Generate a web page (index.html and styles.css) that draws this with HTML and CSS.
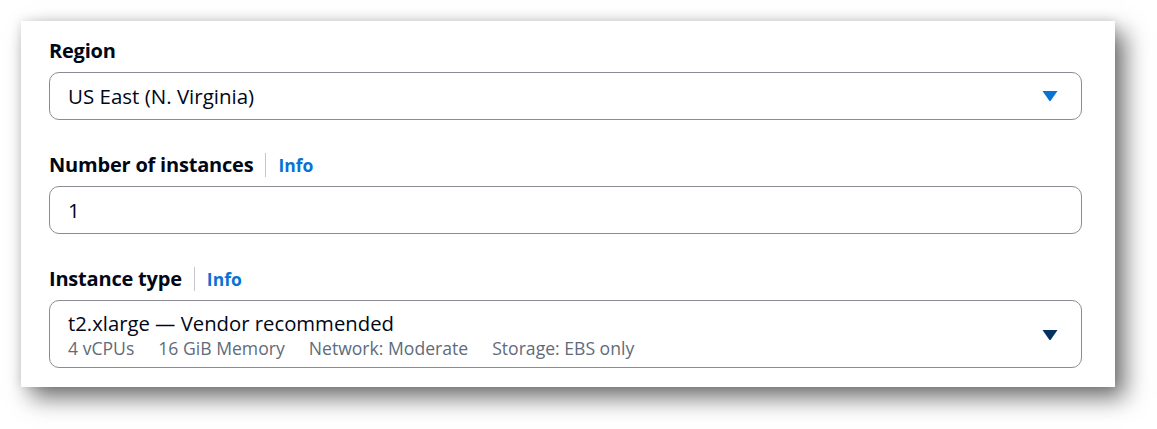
FILE: index.html
```html
<!DOCTYPE html>
<html lang="en">
<head>
	<meta charset="UTF-8">
	<title>Launch instance</title>
	<link rel="stylesheet" href="styles.css">
</head>
<body>
	<div class="panel">
		<div class="field">
			<div class="label"><span class="label-text">Region</span></div>
			<div class="select">
				<span class="value">US East (N. Virginia)</span>
				<svg class="caret" width="16" height="16" viewBox="0 0 16 16"><path d="M0.5 3h15l-6.6 9.6a1.1 1.1 0 0 1-1.8 0z" fill="#0972d3"/></svg>
			</div>
		</div>
		<div class="field">
			<div class="label"><span class="label-text">Number of instances</span><span class="sep"></span><a href="#" class="info">Info</a></div>
			<div class="input"><span class="value">1</span></div>
		</div>
		<div class="field">
			<div class="label"><span class="label-text">Instance type</span><span class="sep"></span><a href="#" class="info">Info</a></div>
			<div class="select tall">
				<div class="option">
					<div class="value">t2.xlarge — Vendor recommended</div>
					<div class="tags">
						<span>4 vCPUs</span>
						<span>16 GiB Memory</span>
						<span>Network: Moderate</span>
						<span>Storage: EBS only</span>
					</div>
				</div>
				<svg class="caret" width="16" height="16" viewBox="0 0 16 16"><path d="M0.5 3h15l-6.6 9.6a1.1 1.1 0 0 1-1.8 0z" fill="#033160"/></svg>
			</div>
		</div>
	</div>
</body>
</html>
```

FILE: styles.css
```css
*{
	margin: 0;
	padding: 0;
	box-sizing: border-box;
}
html,body{
	height: 100%;
}
body{
	background: #fff;
	padding: 21px 0 0 21px;
	font-family: "Open Sans", "Noto Sans", Arial, sans-serif;
	color: #000716;
}
a{
	text-decoration: none;
}
.panel{
	width: 1094px;
	height: 366px;
	padding: 19px 33px 19px 28px;
	background: #fff;
	box-shadow: 10px 11px 22px rgba(0,0,0,0.55), 0 0 10px rgba(0,0,0,0.12);
}
.field{
	margin-bottom: 34px;
}
.field:last-child{
	margin-bottom: 0;
}
.label{
	display: flex;
	align-items: center;
	height: 21px;
	margin-bottom: 11px;
}
.label-text{
	font-size: 20px;
	font-weight: 700;
	letter-spacing: -0.2px;
}
.sep{
	width: 1px;
	height: 24px;
	background: #c6c6cd;
	margin: 0 12px;
}
.info{
	color: #0972d3;
	font-size: 17.5px;
	font-weight: 700;
}
.select,
.input{
	display: flex;
	align-items: center;
	height: 48px;
	padding: 0 23px 0 18px;
	border: 1px solid #8c8c94;
	border-radius: 10px;
	font-size: 20.5px;
}
.select .value,
.input .value{
	flex: 1;
}
.select.tall{
	height: 68px;
	padding-top: 8px;
	padding-bottom: 6px;
}
.option{
	flex: 1;
}
.option .value{
	font-size: 20.3px;
	line-height: 26px;
}
.tags{
	display: flex;
	gap: 24px;
	font-size: 17.6px;
	line-height: 24px;
	color: #5f6b7a;
}
.caret{
	display: block;
}
```
